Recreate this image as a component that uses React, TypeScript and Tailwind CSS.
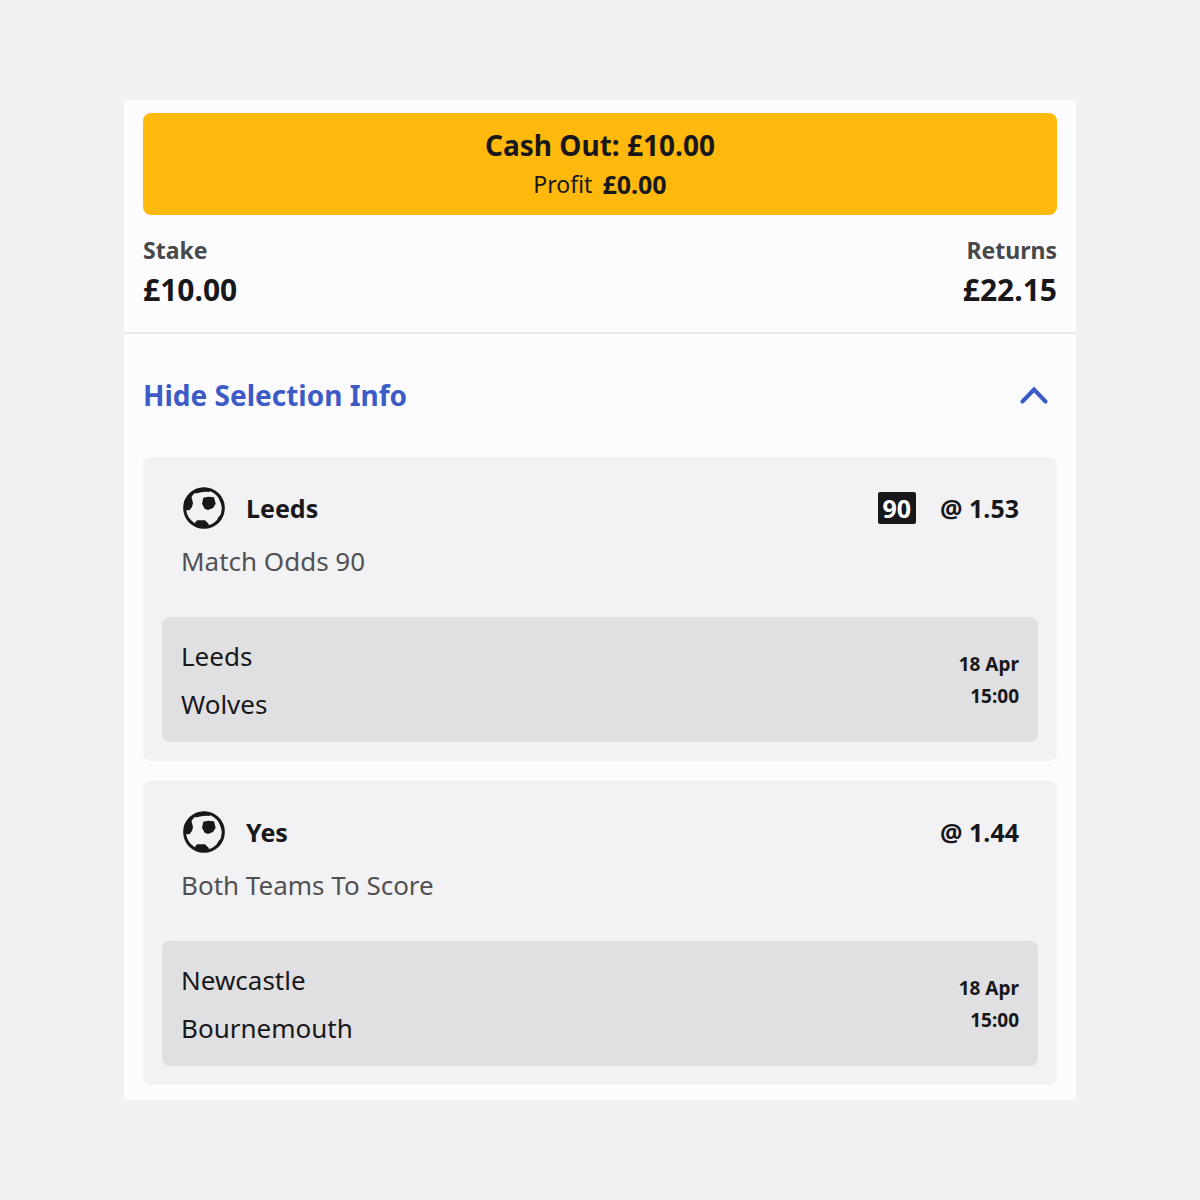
import { useState } from 'react'

const SELECTIONS = [
  {
    id: 1,
    name: 'Leeds',
    market: 'Match Odds 90',
    badge: '90',
    odds: '1.53',
    home: 'Leeds',
    away: 'Wolves',
    date: '18 Apr',
    time: '15:00'
  },
  {
    id: 2,
    name: 'Yes',
    market: 'Both Teams To Score',
    badge: null,
    odds: '1.44',
    home: 'Newcastle',
    away: 'Bournemouth',
    date: '18 Apr',
    time: '15:00'
  }
]

function FootballIcon() {
  return (
    <svg viewBox="0 0 126 126" className="size-[42px] shrink-0" fill="currentColor" aria-hidden="true">
      <circle cx="63" cy="63" r="58" fill="none" stroke="currentColor" strokeWidth="9" />
      {/* seams thickening the rim */}
      <path d="M18 26 Q36 3 63 2 Q78 3 88 8 L78 15 Q58 13 42 19 L34 19 L28 26 L26 31 Z" />
      <path d="M90 8 Q114 22 121 46 L123 78 Q117 94 106 107 L91 117 L92 110 L101 102 L106 91 L115 82 L117 63 L114 50 L106 30 Z" />
      {/* panels */}
      <path d="M3 46 Q8 31 20 22 L26 32 L30 48 L27 60 L19 70 L4 69 Z" />
      <path d="M61 32 L76 29 L93 31 L98 50 L90 63 L75 69 L65 65 L57 50 Z" />
      <path d="M35 109 L42 100 L66 100 L78 112 L74 122 L58 124 L38 118 Z" />
    </svg>
  )
}

export default function App() {
  const [open, setOpen] = useState(true)

  return (
    <div className="min-h-screen bg-[#f1f1f4] px-4 py-[100px] font-['Noto_Sans',sans-serif] text-[#18181b]">
      <main className="mx-auto max-w-[952px] bg-[#fcfcfe] pb-[15px]">

        {/* Cash out */}
        <section className="border-b-2 border-[#e9e9ec] px-[19px] pt-[13px] pb-[22px]">
          <button className="flex w-full flex-col items-center rounded-lg bg-[#ffb80c] pt-3 pb-3">
            <span className="text-[28px] leading-10 font-bold">Cash Out: £10.00</span>
            <span className="flex items-center gap-[10px] text-[23px] leading-[38px]">
              Profit <strong className="text-[25px] leading-[38px] font-bold">£0.00</strong>
            </span>
          </button>

          <dl className="mt-[15px] flex justify-between">
            <div>
              <dt className="text-[23px] leading-10 font-bold text-[#48484b]">Stake</dt>
              <dd className="text-[30px] leading-10 font-bold">£10.00</dd>
            </div>
            <div className="text-right">
              <dt className="text-[23px] leading-10 font-bold text-[#48484b]">Returns</dt>
              <dd className="text-[30px] leading-10 font-bold">£22.15</dd>
            </div>
          </dl>
        </section>

        {/* Selections */}
        <section className="px-[19px]">
          <button
            className="flex w-full items-center justify-between pt-[41px] pb-[42px] pr-[9px] text-[28px] leading-10 font-bold text-[#3d5bc7]"
            aria-expanded={open}
            onClick={() => setOpen(!open)}
          >
            {open ? 'Hide' : 'Show'} Selection Info
            <svg viewBox="0 0 28 18" className={`h-[18px] w-7 ${open ? '' : 'rotate-180'}`} fill="none" stroke="currentColor" strokeWidth="4" strokeLinecap="round" aria-hidden="true">
              <path d="M2.5 15.5 L14 3.5 L25.5 15.5" />
            </svg>
          </button>

          {open && (
            <ul className="space-y-5">
              {SELECTIONS.map(item => (
                <li key={item.id} className="rounded-lg bg-[#f2f2f4] p-[19px]">
                  <div className="px-[19px] pt-[11px]">
                    <div className="flex items-center pl-0.5 text-[25px] leading-10 font-bold">
                      <FootballIcon />
                      <h2 className="ml-[21px] flex-1">{item.name}</h2>
                      {item.badge && (
                        <span className="mr-6 rounded-xs bg-[#18181b] px-[5px] leading-8 text-white">{item.badge}</span>
                      )}
                      <span>@ {item.odds}</span>
                    </div>
                    <p className="mt-3 text-[26px] leading-10 text-[#515154]">{item.market}</p>
                  </div>

                  <div className="mt-9 flex items-center justify-between rounded-lg bg-[#e0e0e2] px-[19px] pt-[15px] pb-[14px]">
                    <div className="text-[26px] leading-[48px]">
                      <p>{item.home}</p>
                      <p>{item.away}</p>
                    </div>
                    <div className="text-right text-[19px] leading-8 font-bold">
                      <p>{item.date}</p>
                      <p>{item.time}</p>
                    </div>
                  </div>
                </li>
              ))}
            </ul>
          )}
        </section>

      </main>
    </div>
  )
}
